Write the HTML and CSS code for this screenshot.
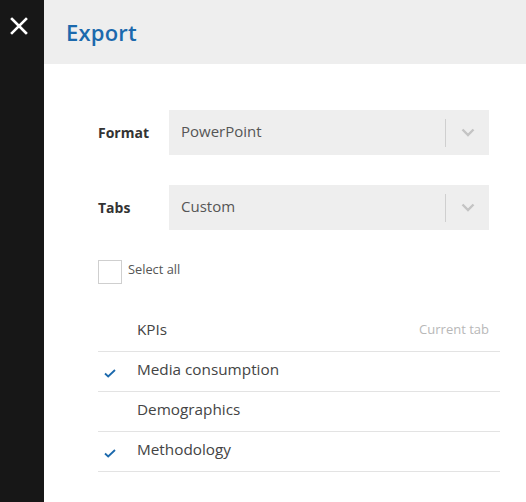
FILE: index.html
```html
<!DOCTYPE html>
<html>
<head>
<meta charset="utf-8">
<link rel="stylesheet" href="styles.css">
</head>
<body>
<aside class="sidebar">
  <button class="close" aria-label="Close">
    <svg width="18" height="18" viewBox="0 0 18 18"><path d="M2 2 L16 16 M16 2 L2 16" stroke="#fff" stroke-width="2.6" stroke-linecap="square"/></svg>
  </button>
</aside>
<main class="panel">
  <header class="header"><h1 class="title">Export</h1></header>
  <section class="content">
    <div class="field">
      <label class="label">Format</label>
      <div class="select">
        <span class="select-value">PowerPoint</span>
        <span class="select-sep"></span>
        <svg class="chevron" width="14" height="9" viewBox="0 0 14 9"><path d="M1.5 1.5 L7 7 L12.5 1.5" fill="none" stroke="#c4c4c4" stroke-width="2.4"/></svg>
      </div>
    </div>
    <div class="field">
      <label class="label">Tabs</label>
      <div class="select">
        <span class="select-value">Custom</span>
        <span class="select-sep"></span>
        <svg class="chevron" width="14" height="9" viewBox="0 0 14 9"><path d="M1.5 1.5 L7 7 L12.5 1.5" fill="none" stroke="#c4c4c4" stroke-width="2.4"/></svg>
      </div>
    </div>
    <div class="select-all">
      <span class="checkbox"></span>
      <span class="select-all-text">Select all</span>
    </div>
    <ul class="tab-list">
      <li class="tab-row"><span class="tick"></span><span class="tab-name">KPIs</span><span class="tab-note">Current tab</span></li>
      <li class="tab-row"><span class="tick"><svg width="12" height="9" viewBox="0 0 12 9"><path d="M1 4.5 L4.2 7.5 L11 1" fill="none" stroke="#1b69ad" stroke-width="1.8"/></svg></span><span class="tab-name">Media consumption</span></li>
      <li class="tab-row"><span class="tick"></span><span class="tab-name">Demographics</span></li>
      <li class="tab-row"><span class="tick"><svg width="12" height="9" viewBox="0 0 12 9"><path d="M1 4.5 L4.2 7.5 L11 1" fill="none" stroke="#1b69ad" stroke-width="1.8"/></svg></span><span class="tab-name">Methodology</span></li>
    </ul>
  </section>
</main>
</body>
</html>
```
FILE: styles.css
```css
* { box-sizing: border-box; }
html, body { margin: 0; padding: 0; }
body {
  display: flex;
  width: 526px;
  height: 502px;
  overflow: hidden;
  font-family: "Open Sans", "Liberation Sans", sans-serif;
  background: #fff;
  color: #444;
}
.sidebar {
  width: 44px;
  flex: 0 0 44px;
  background: #171717;
}
.close {
  display: block;
  margin: 17px 0 0 10px;
  padding: 0;
  border: 0;
  background: none;
  width: 18px;
  height: 18px;
}
.close svg { display: block; }
.panel { flex: 1; display: flex; flex-direction: column; }
.header {
  height: 64px;
  background: #eeeeee;
  display: flex;
  align-items: center;
  padding-left: 22px;
}
.title {
  margin: 0;
  font-size: 22px;
  font-weight: 600;
  color: #1b69ad;
  letter-spacing: 0.2px;
  padding-bottom: 1px;
}
.content {
  padding: 46px 26px 0 54px;
}
.field {
  display: flex;
  align-items: center;
  margin-right: 11px;
  margin-bottom: 30px;
}
.label {
  width: 71px;
  font-size: 14px;
  font-weight: 700;
  color: #333;
}
.select {
  flex: 1;
  height: 45px;
  background: #eeeeee;
  display: flex;
  align-items: center;
  padding-left: 12px;
}
.select-value {
  flex: 1;
  font-size: 15px;
  color: #555;
  padding-bottom: 4px;
}
.select-sep {
  width: 1px;
  height: 28px;
  background: #cfcfcf;
}
.chevron { margin: 0 14px 0 15px; }
.select-all {
  display: flex;
  align-items: center;
  margin-top: 1px;
}
.checkbox {
  width: 24px;
  height: 24px;
  border: 1px solid #cfcfcf;
  background: #fff;
}
.select-all-text {
  margin-left: 6px;
  font-size: 12.8px;
  color: #555;
  padding-bottom: 6px;
}
.tab-list {
  list-style: none;
  margin: 28px 0 0;
  padding: 0;
}
.tab-row {
  display: flex;
  align-items: center;
  height: 40px;
  border-bottom: 1px solid #e3e3e3;
  padding-bottom: 6px;
  padding-right: 11px;
}
.tick {
  width: 39px;
  display: flex;
  padding-left: 6px;
  padding-top: 10px;
}
.tab-name {
  flex: 1;
  font-size: 15.3px;
  color: #444;
}
.tab-note {
  font-size: 13px;
  color: #b8b8b8;
}
```
